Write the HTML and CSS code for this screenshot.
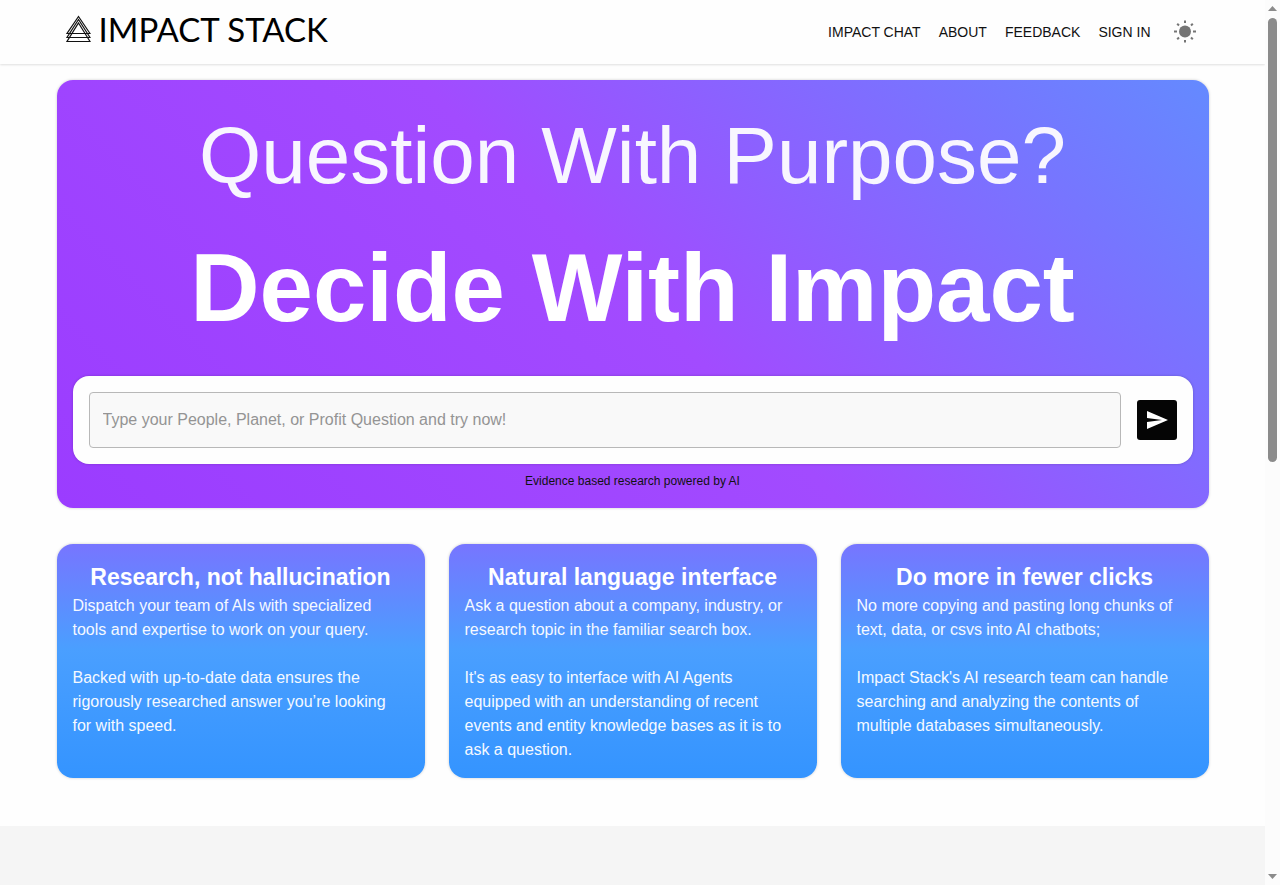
FILE: index.html
```html
<!DOCTYPE html>
<html lang="en">
<head>
  <meta charset="utf-8">
  <meta name="viewport" content="width=device-width, initial-scale=1.0">
  <title>Impact Stack</title>
  <link rel="stylesheet" href="styles.css">
</head>
<body>
  <div class="page">
    <header class="header">
      <div class="container header-inner">
        <a class="logo" href="#">
          <svg width="26" height="28" viewBox="0 0 26 28" fill="none" stroke="#111" stroke-width="1.2">
            <path d="M13.5 1.5L25 18.5H2z" />
            <path d="M13.5 4.5L25 22.5H2z" />
            <path d="M13.5 8L25 26.5H2z" />
          </svg>
          <span>IMPACT STACK</span>
        </a>
        <nav class="nav">
          <a href="#">IMPACT CHAT</a>
          <a href="#">ABOUT</a>
          <a href="#">FEEDBACK</a>
          <a href="#">SIGN IN</a>
          <button class="theme-button" type="button" aria-label="Toggle theme">
            <svg width="24" height="24" viewBox="0 0 24 24" stroke="#757575" stroke-width="2">
              <circle cx="12" cy="11.5" r="6" fill="#757575" stroke="none" />
              <path d="M12 .5v2.5M12 20v2.5M1 11.5h3M20 11.5h3M4.2 3.7l1.8 1.8M18 17.5l1.8 1.8M4.2 19.3l1.8-1.8M18 5.5l1.8-1.8" />
            </svg>
          </button>
        </nav>
      </div>
    </header>
    <main>
      <div class="container">
        <section class="hero">
          <h2 class="hero-question">Question With Purpose?</h2>
          <h1 class="hero-title">Decide With Impact</h1>
          <form class="search">
            <input class="search-input" type="text" aria-label="Question" placeholder="Type your People, Planet, or Profit Question and try now!">
            <button class="send-button" type="button" aria-label="Send">
              <svg width="24" height="24" viewBox="0 0 24 24" fill="#fff">
                <path d="M2.01 21L23 12 2.01 3 2 10l15 2-15 2z" />
              </svg>
            </button>
          </form>
          <p class="caption">Evidence based research powered by AI</p>
        </section>
        <section class="cards">
          <article class="card">
            <h3>Research, not hallucination</h3>
            <p>Dispatch your team of AIs with specialized tools and expertise to work on your query.</p>
            <p>Backed with up-to-date data ensures the rigorously researched answer you’re looking for with speed.</p>
          </article>
          <article class="card">
            <h3>Natural language interface</h3>
            <p>Ask a question about a company, industry, or research topic in the familiar search box.</p>
            <p>It's as easy to interface with AI Agents equipped with an understanding of recent events and entity knowledge bases as it is to ask a question.</p>
          </article>
          <article class="card">
            <h3>Do more in fewer clicks</h3>
            <p>No more copying and pasting long chunks of text, data, or csvs into AI chatbots;</p>
            <p>Impact Stack's AI research team can handle searching and analyzing the contents of multiple databases simultaneously.</p>
          </article>
        </section>
      </div>
      <section class="band"></section>
    </main>
  </div>
  <div class="scrollbar">
    <svg width="9" height="5" viewBox="0 0 9 5" fill="#8b8b8b"><path d="M0 5L4.5 0 9 5z" /></svg>
    <div class="scroll-track"><div class="scroll-thumb"></div></div>
    <svg width="9" height="5" viewBox="0 0 9 5" fill="#8b8b8b"><path d="M0 0h9L4.5 5z" /></svg>
  </div>
</body>
</html>
```
FILE: styles.css
```css
* {
  box-sizing: border-box;
}
body {
  margin: 0;
  height: 100vh;
  display: flex;
  overflow: hidden;
  background: #fefefe;
  color: #111;
  font-family: "Liberation Sans", Arial, sans-serif;
}
h1, h2, h3, p {
  margin: 0;
}
a {
  color: inherit;
  text-decoration: none;
}
button {
  padding: 0;
  border: none;
  cursor: pointer;
}
.page {
  flex: 1;
  min-width: 0;
  display: flex;
  flex-direction: column;
}
.container {
  width: 100%;
  max-width: 1200px;
  margin: 0 auto;
  padding: 0 24px;
}

/* header */
.header {
  box-shadow: 0 1px 2px rgba(0, 0, 0, 0.12);
}
.header-inner {
  height: 64px;
  display: flex;
  align-items: center;
  justify-content: space-between;
}
.logo {
  display: flex;
  align-items: center;
  gap: 8px;
  padding: 0 0 6px 8px;
  color: #000;
  font-family: Lato, sans-serif;
  font-size: 33px;
  line-height: 40px;
}
.nav {
  display: flex;
  align-items: center;
  gap: 18px;
  padding-right: 4px;
  font-size: 14px;
  line-height: 24px;
}
.theme-button {
  width: 32px;
  height: 40px;
  display: flex;
  align-items: center;
  justify-content: center;
  margin-right: 4px;
  background: transparent;
}

/* hero */
main {
  flex: 1;
  display: flex;
  flex-direction: column;
  padding-top: 16px;
}
.hero {
  padding: 16px;
  border-radius: 16px;
  background: linear-gradient(45deg, #9b3cff 0%, #a24bff 50%, #7577ff 85%, #648aff 100%);
  box-shadow: 0 0 3px rgba(0, 0, 0, 0.2);
  text-align: center;
}
.hero-question {
  margin-bottom: 16px;
  color: #f8f6ff;
  font-size: 80px;
  font-weight: 400;
  line-height: 120px;
}
.hero-title {
  margin-bottom: 32px;
  color: #fff;
  font-size: 96px;
  line-height: 112px;
}
.search {
  display: flex;
  align-items: center;
  gap: 16px;
  padding: 16px;
  border-radius: 16px;
  background: #fefefe;
  box-shadow: 0 0 3px rgba(0, 0, 0, 0.2);
}
.search-input {
  flex: 1;
  min-width: 0;
  height: 56px;
  padding: 0 13px;
  border: 1px solid #b8b8b8;
  border-radius: 4px;
  background: #f9f9f9;
  font-family: inherit;
  font-size: 16px;
}
.search-input::placeholder {
  color: #949494;
}
.send-button {
  width: 40px;
  height: 40px;
  display: flex;
  align-items: center;
  justify-content: center;
  border-radius: 3px;
  background: #050505;
}
.caption {
  padding: 8px 0 2px;
  font-size: 12px;
  line-height: 18px;
}

/* cards */
.cards {
  display: grid;
  grid-template-columns: repeat(3, 1fr);
  gap: 24px;
  margin-top: 36px;
  margin-bottom: 48px;
}
.card {
  padding: 16px;
  border-radius: 16px;
  background: linear-gradient(180deg, #7775ff 0%, #4a9fff 45%, #3494ff 100%);
  box-shadow: 0 0 3px rgba(0, 0, 0, 0.2);
  color: #f5f9ff;
  font-size: 16px;
  line-height: 24px;
}
.card h3 {
  color: #fff;
  font-size: 23px;
  line-height: 34px;
  text-align: center;
}
.card p + p {
  margin-top: 24px;
}
.band {
  flex: 1;
  background: #f5f5f5;
}

/* scrollbar */
.scrollbar {
  width: 15px;
  height: 100vh;
  display: flex;
  flex-direction: column;
  align-items: center;
  padding: 6px 0;
  background: #fcfcfc;
}
.scroll-track {
  flex: 1;
  padding: 7px 0;
}
.scroll-thumb {
  width: 9px;
  height: 444px;
  border-radius: 5px;
  background: #8b8b8b;
}
```
